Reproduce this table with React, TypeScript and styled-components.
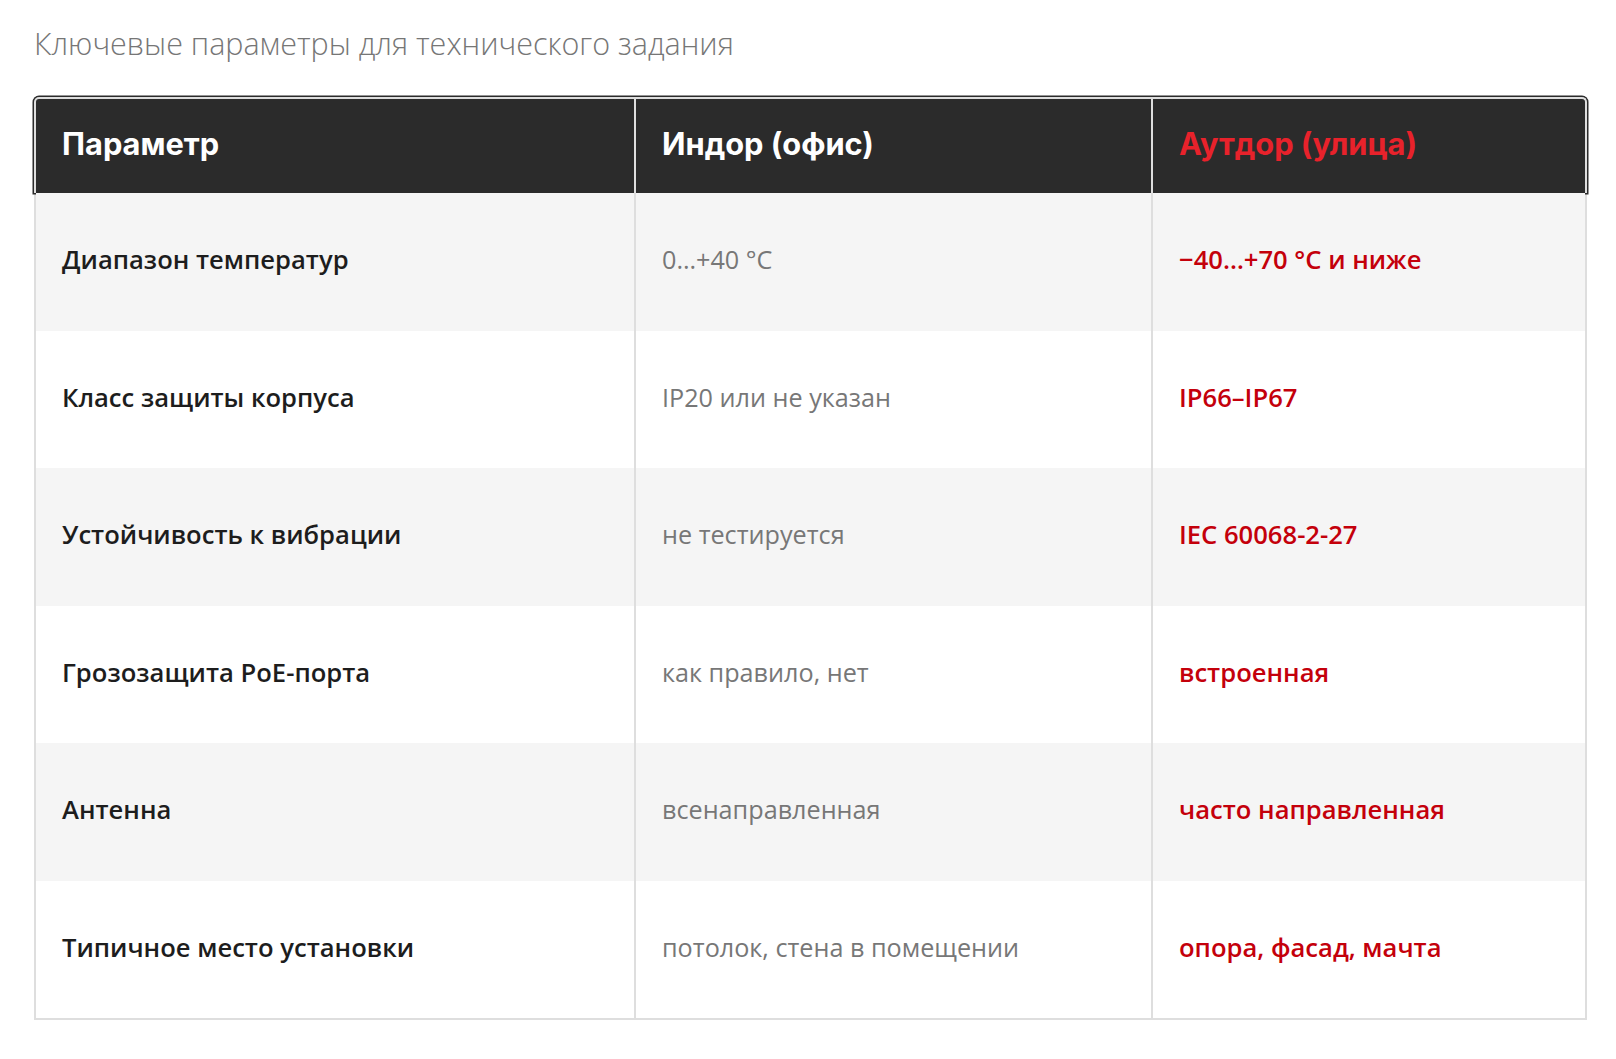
import React, { FC } from 'react';
import styled, { createGlobalStyle } from 'styled-components';

type Row = {
    param: string;
    indoor: string;
    outdoor: string;
};

const rows: Row[] = [
    { param: 'Диапазон температур', indoor: '0…+40 °C', outdoor: '−40…+70 °C и ниже' },
    { param: 'Класс защиты корпуса', indoor: 'IP20 или не указан', outdoor: 'IP66–IP67' },
    { param: 'Устойчивость к вибрации', indoor: 'не тестируется', outdoor: 'IEC 60068-2-27' },
    { param: 'Грозозащита PoE-порта', indoor: 'как правило, нет', outdoor: 'встроенная' },
    { param: 'Антенна', indoor: 'всенаправленная', outdoor: 'часто направленная' },
    { param: 'Типичное место установки', indoor: 'потолок, стена в помещении', outdoor: 'опора, фасад, мачта' },
];

const App: FC = () => {
    return (
        <>
            <GlobalStyle />
            <Page>
                <Title>Ключевые параметры для технического задания</Title>
                <Table>
                    <HeaderRow>
                        <HeadCell>Параметр</HeadCell>
                        <HeadCell>Индор (офис)</HeadCell>
                        <HeadCell $accent>Аутдор (улица)</HeadCell>
                    </HeaderRow>
                    {rows.map((row, i) => (
                        <BodyRow key={row.param} $striped={i % 2 === 0}>
                            <ParamCell>{row.param}</ParamCell>
                            <IndoorCell>{row.indoor}</IndoorCell>
                            <OutdoorCell>{row.outdoor}</OutdoorCell>
                        </BodyRow>
                    ))}
                </Table>
            </Page>
        </>
    );
};

export default App;

// Styled Components
const GlobalStyle = createGlobalStyle`
  * {
    box-sizing: border-box;
  }
  body {
    margin: 0;
    background: #fff;
    font-family: "Open Sans", "Liberation Sans", sans-serif;
  }
`;

const Page = styled.div`
  padding: 22px 29px 30px 34px;
`;

const Title = styled.h2`
  margin: 0 0 33px;
  font-family: "Open Sans", sans-serif;
  font-weight: 300;
  font-size: 30.5px;
  line-height: 42px;
  color: #767676;
`;

const Table = styled.div`
  border: 2px solid #dedede;
  border-top: none;
`;

const columns = `598px 517px 1fr`;

const HeaderRow = styled.div`
  display: grid;
  grid-template-columns: ${columns};
  margin: 0 -2px;
  background: #2b2b2b;
  border: 2px solid #dedede;
  border-bottom: none;
  border-radius: 5px 5px 0 0;
  box-shadow: 0 0 0 1.5px #2b2b2b;
`;

const HeadCell = styled.div<{ $accent?: boolean }>`
  padding: 0 26px 5px;
  height: 94px;
  display: flex;
  align-items: center;
  font-family: Inter, "DejaVu Sans", sans-serif;
  font-weight: 700;
  font-size: 30.8px;
  color: ${({ $accent }) => ($accent ? '#e8222b' : '#fff')};

  & + & {
    border-left: 2px solid #dedede;
  }
`;

const BodyRow = styled.div<{ $striped: boolean }>`
  display: grid;
  grid-template-columns: ${columns};
  background: ${({ $striped }) => ($striped ? '#f5f5f5' : '#fff')};
`;

const Cell = styled.div`
  padding: 48px 26px 52px;
  font-size: 25.6px;
  line-height: 37.5px;

  & + & {
    border-left: 2px solid #dedede;
  }
`;

const ParamCell = styled(Cell)`
  font-weight: 600;
  color: #1d1d1d;
`;

const IndoorCell = styled(Cell)`
  font-weight: 400;
  font-size: 25.2px;
  color: #777;
`;

const OutdoorCell = styled(Cell)`
  font-weight: 600;
  color: #c4000b;
`;
